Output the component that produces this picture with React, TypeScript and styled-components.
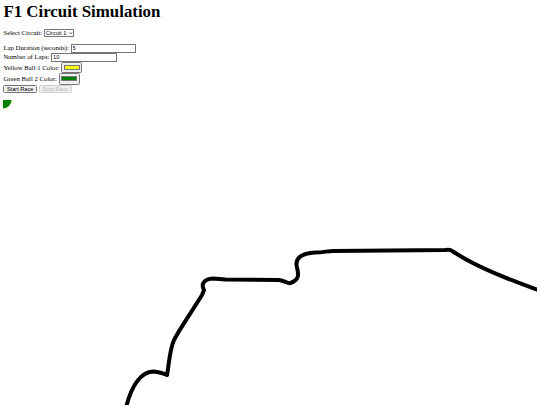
import React, { useState } from "react";
import styled, { createGlobalStyle } from "styled-components";

// page is laid out at 1280 css px wide and shown scaled into the frame
const SCALE = 540 / 1280;
const TRACK_W = 1264;
const TRACK_H = 724;

const GlobalStyle = createGlobalStyle`
  html {
    zoom: ${SCALE};
    overflow: hidden;
  }

  body {
    margin: 4px 8px 8px;
    font-family: "Liberation Serif", "Times New Roman", serif;
    font-size: 16px;
    color: #000;
    background: #fff;
  }
`;

const Title = styled.h1`
  font-size: 40px;
  font-weight: 700;
  margin: 0 0 17px;
`;

const Row = styled.div<{ $gap?: number }>`
  margin-bottom: ${(p) => p.$gap ?? 0}px;
`;

const Label = styled.label`
  font-size: 16px;
`;

const SelectWrap = styled.span`
  position: relative;
  display: inline-block;
`;

const Select = styled.select`
  appearance: none;
  box-sizing: border-box;
  width: 72px;
  height: 20px;
  padding: 0 12px 0 2px;
  border: 1px solid #767676;
  border-radius: 2px;
  background: #fff;
  color: #000;
  font-family: "Liberation Sans", Arial, sans-serif;
  font-size: 13.33px;
`;

const Chevron = styled.svg`
  position: absolute;
  right: 3px;
  top: 7px;
  pointer-events: none;
`;

const TextInput = styled.input`
  box-sizing: border-box;
  width: 156px;
  font-family: "Liberation Sans", Arial, sans-serif;
  font-size: 13.33px;
`;

const ColorInput = styled.input``;

const Button = styled.button`
  font-family: "Liberation Sans", Arial, sans-serif;
  font-size: 13.33px;
`;

const Canvas = styled.svg`
  display: block;
  margin-top: 16px;
`;

export default function App() {
  const [circuit, setCircuit] = useState("1");
  const [lapDuration, setLapDuration] = useState("5");
  const [laps, setLaps] = useState("10");
  const [yellow, setYellow] = useState("#ffff00");
  const [green, setGreen] = useState("#008000");

  return (
    <>
      <GlobalStyle />
      <Title>F1 Circuit Simulation</Title>
      <Row $gap={16}>
        <Label htmlFor="circuit">Select Circuit: </Label>
        <SelectWrap>
          <Select id="circuit" value={circuit} onChange={(e) => setCircuit(e.target.value)}>
            <option value="1">Circuit 1</option>
            <option value="2">Circuit 2</option>
          </Select>
          <Chevron width="9" height="6" viewBox="0 0 9 6">
            <path d="M1 1 L4.5 4.5 L8 1" fill="none" stroke="#000" strokeWidth="1.5" />
          </Chevron>
        </SelectWrap>
      </Row>
      <Row>
        <Label htmlFor="lapDuration">Lap Duration (seconds): </Label>
        <TextInput id="lapDuration" value={lapDuration} onChange={(e) => setLapDuration(e.target.value)} />
      </Row>
      <Row>
        <Label htmlFor="laps">Number of Laps: </Label>
        <TextInput id="laps" value={laps} onChange={(e) => setLaps(e.target.value)} />
      </Row>
      <Row>
        <Label htmlFor="yellow">Yellow Ball 1 Color: </Label>
        <ColorInput id="yellow" type="color" value={yellow} onChange={(e) => setYellow(e.target.value)} />
      </Row>
      <Row>
        <Label htmlFor="green">Green Ball 2 Color: </Label>
        <ColorInput id="green" type="color" value={green} onChange={(e) => setGreen(e.target.value)} />
      </Row>
      <Row>
        <Button>Start Race</Button> <Button disabled>Stop Race</Button>
      </Row>
      <Canvas
        width={TRACK_W}
        height={TRACK_H}
        viewBox={`0 0 ${TRACK_W * SCALE} ${TRACK_H * SCALE}`}
      >
        <path
          d="M 123 307.5
             C 127.5 290, 135 272.5, 150 271.5
             C 156 271.5, 161 274, 164 275
             C 166 265, 166.5 250, 171 240
             C 176 230, 185 217.5, 199 195
             L 201 190
             C 198 185, 200 179, 210 178.5
             L 222.5 179.5
             L 276 180
             C 282.5 181, 285 184, 287.5 183
             C 296 180, 296 175, 294 167.5
             C 291.5 159, 297.5 153, 312.5 152.5
             C 320 152.5, 325 151, 330 151
             L 442.5 150
             C 446 149, 447.5 149.5, 450 151.5
             C 470 165, 505 180, 550 195"
          fill="none"
          stroke="#000"
          strokeWidth={4}
          strokeLinejoin="round"
        />
        <circle cx={0} cy={0} r={8.5} fill={yellow} />
        <circle cx={0} cy={0} r={8.5} fill={green} />
      </Canvas>
    </>
  );
}
